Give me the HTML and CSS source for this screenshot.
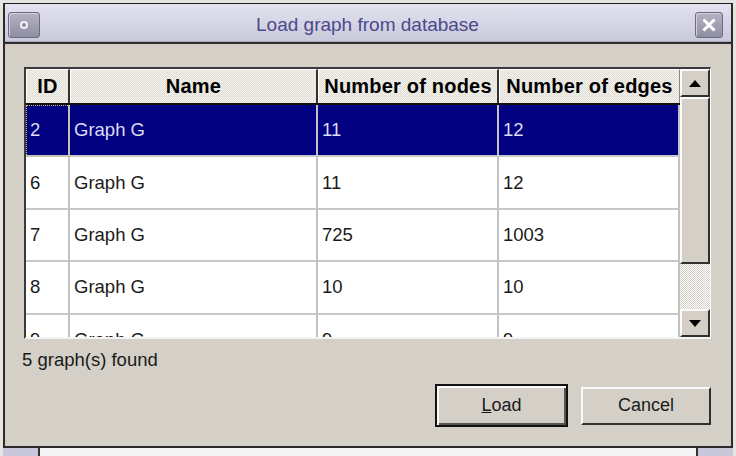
FILE: index.html
```html
<!DOCTYPE html>
<html>
<head>
<meta charset="utf-8">
<link rel="stylesheet" href="styles.css">
</head>
<body>
<div class="window">
  <div class="titlebar">
    <div class="tb-btn tb-menu"><span class="ring"></span></div>
    <div class="title">Load graph from database</div>
    <div class="tb-btn tb-close">
      <svg width="14" height="14" viewBox="0 0 14 14"><path d="M2.5 2.5 L11.5 11.5 M11.5 2.5 L2.5 11.5" stroke="#fff" stroke-width="3" stroke-linecap="square"/></svg>
    </div>
  </div>
  <div class="content">
    <div class="pane">
      <div class="tablewrap">
        <div class="header">
          <div class="hcell">ID</div>
          <div class="hcell">Name</div>
          <div class="hcell">Number of nodes</div>
          <div class="hcell">Number of edges</div>
        </div>
        <div class="rows">
          <div class="row selected">
            <div class="cell focus">2</div><div class="cell">Graph G</div><div class="cell">11</div><div class="cell">12</div>
          </div>
          <div class="row">
            <div class="cell">6</div><div class="cell">Graph G</div><div class="cell">11</div><div class="cell">12</div>
          </div>
          <div class="row">
            <div class="cell">7</div><div class="cell">Graph G</div><div class="cell">725</div><div class="cell">1003</div>
          </div>
          <div class="row">
            <div class="cell">8</div><div class="cell">Graph G</div><div class="cell">10</div><div class="cell">10</div>
          </div>
          <div class="row">
            <div class="cell">9</div><div class="cell">Graph G</div><div class="cell">9</div><div class="cell">9</div>
          </div>
        </div>
      </div>
      <div class="scrollbar">
        <div class="sb-btn"><svg width="12" height="7" viewBox="0 0 12 7"><path d="M0 7 L6 0 L12 7 Z" fill="#000"/></svg></div>
        <div class="sb-thumb"></div>
        <div class="sb-track"></div>
        <div class="sb-btn"><svg width="12" height="7" viewBox="0 0 12 7"><path d="M0 0 L12 0 L6 7 Z" fill="#000"/></svg></div>
      </div>
    </div>
    <div class="status">5 graph(s) found</div>
    <div class="buttons">
      <button class="btn default"><span class="u">L</span>oad</button>
      <button class="btn">Cancel</button>
    </div>
  </div>
</div>
<div class="strip">
  <div class="strip-l"></div>
  <div class="strip-mid"></div>
  <div class="strip-r"></div>
</div>
</body>
</html>
```
FILE: styles.css
```css
* { box-sizing: border-box; }
html, body { margin: 0; padding: 0; }
body {
  width: 736px;
  height: 456px;
  overflow: hidden;
  background: #e6e4e0;
  font-family: "Liberation Sans", Arial, sans-serif;
  padding-top: 3px;
}
.window {
  margin: 0 3px;
  width: 730px;
  border: 2px solid #2a2a2a;
  border-top: 1px solid #1a1a1a;
  background: #d4d0c8;
}
.titlebar {
  height: 40px;
  display: flex;
  align-items: flex-start;
  padding: 8px 8px 0 3px;
  background: linear-gradient(#e3e2ef, #d6d5e5 50%, #c9c8da);
  border-bottom: 2px solid #2e2e2e;
  box-shadow: inset 0 -1px 0 #a9a8b8;
}
.tb-btn {
  height: 26px;
  border-radius: 3px;
  border: 1px solid #6e6c80;
  background: linear-gradient(#b4b2c4, #8f8da2);
  box-shadow: inset 1px 1px 0 #d0cfdc;
  display: flex;
  align-items: center;
  justify-content: center;
}
.tb-menu { width: 32px; }
.tb-close { width: 28px; }
.ring {
  width: 8px;
  height: 8px;
  border-radius: 50%;
  border: 2px solid #f2f2f6;
  background: #8a889c;
}
.title {
  flex: 1;
  text-align: center;
  font-size: 19px;
  line-height: 26px;
  color: #4a4a8c;
}
.content {
  display: flex;
  flex-direction: column;
  padding: 23px 20px 19px 19px;
}
.pane {
  display: flex;
  height: 272px;
  border-top: 2px solid #3a3a3a;
  border-left: 2px solid #3a3a3a;
  border-right: 1px solid #ffffff;
  border-bottom: 2px solid #f4f4f4;
  background: #fff;
}
.tablewrap {
  width: 654px;
  display: flex;
  flex-direction: column;
  overflow: hidden;
}
.header {
  display: grid;
  grid-template-columns: 44px 248px 181px 181px;
  height: 36px;
  flex: none;
  border-bottom: 2px solid #111;
}
.hcell {
  background: repeating-conic-gradient(#f3f1ec 0 25%, #e2dfd7 0 50%) 0 0 / 2px 2px;
  border-top: 1px solid #fff;
  border-left: 1px solid #fff;
  border-right: 2px solid #333;
  font-weight: bold;
  font-size: 20px;
  letter-spacing: 0.2px;
  color: #000;
  text-align: center;
  line-height: 33px;
  white-space: nowrap;
}
.hcell:last-child { border-right: 1px solid #888; }
.rows { flex: 1; overflow: hidden; }
.row {
  display: grid;
  grid-template-columns: 44px 248px 181px 181px;
  height: 52.4px;
}
.cell {
  border-right: 2px solid #c2c2c2;
  border-bottom: 2px solid #c8c8c8;
  font-size: 18.5px;
  color: #1a1a1a;
  padding-left: 4px;
  display: flex;
  align-items: center;
  white-space: nowrap;
}
.row.selected .cell {
  background: #000080;
  color: #dcdcf4;
}
.cell.focus {
  outline: 1px dotted #c8c070;
  outline-offset: -1px;
}
.scrollbar {
  width: 30px;
  display: flex;
  flex-direction: column;
  background: #d4d0c8;
}
.sb-btn, .sb-thumb {
  background: #d4d0c8;
  border-top: 2px solid #fafafa;
  border-left: 2px solid #fafafa;
  border-right: 2px solid #303030;
  border-bottom: 2px solid #303030;
}
.sb-btn {
  height: 28px;
  display: flex;
  align-items: center;
  justify-content: center;
  flex: none;
}
.sb-thumb { height: 167px; flex: none; }
.sb-track {
  flex: 1;
  background: repeating-conic-gradient(#ffffff 0 25%, #d4d0c8 0 50%) 0 0 / 2px 2px;
}
.status {
  margin-top: 11px;
  margin-left: -2px;
  font-size: 18.5px;
  line-height: 20px;
  color: #1a1a1a;
}
.buttons {
  margin-top: 14px;
  display: flex;
  justify-content: flex-end;
  align-items: center;
  gap: 13px;
}
.btn {
  font-family: "Liberation Sans", Arial, sans-serif;
  font-size: 18px;
  color: #1a1a1a;
  background: #d4d0c8;
  width: 130px;
  height: 38px;
  border-top: 2px solid #fafafa;
  border-left: 2px solid #fafafa;
  border-right: 2px solid #303030;
  border-bottom: 2px solid #303030;
  padding: 0;
}
.btn.default {
  width: 133px;
  height: 43px;
  border: 2px solid #111;
  box-shadow: inset 2px 2px 0 #fafafa, inset -2px -2px 0 #555;
}
.u { text-decoration: underline; }
.strip {
  display: flex;
  height: 8px;
  background: #f4f4f4;
  margin: 0 3px;
}
.strip-l { width: 37px; background: #c9c8da; border-right: 2px solid #333; }
.strip-mid { flex: 1; }
.strip-r { width: 37px; background: #c9c8da; border-left: 2px solid #333; }
```
